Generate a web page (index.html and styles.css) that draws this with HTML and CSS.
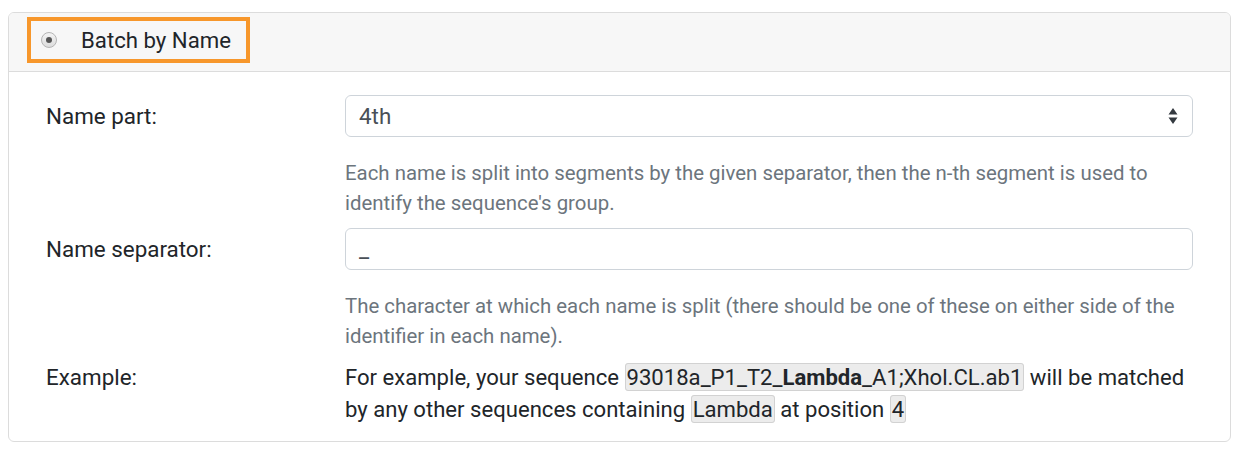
FILE: index.html
```html
<!DOCTYPE html>
<html>
<head>
<meta charset="utf-8">
<link rel="stylesheet" href="styles.css">
</head>
<body>
<div class="card">
  <div class="card-header">
    <label class="highlight">
      <span class="radio"><span class="dot"></span></span>
      <span class="title">Batch by Name</span>
    </label>
  </div>
  <div class="card-body">
    <div class="row">
      <div class="label">Name part:</div>
      <div class="field">
        <div class="control select">
          <span>4th</span>
          <svg class="arrows" width="10" height="18" viewBox="0 0 10 18"><path d="M5 1 L9.5 7.5 L0.5 7.5 Z M0.5 10.5 L9.5 10.5 L5 17 Z" fill="#343a40"/></svg>
        </div>
        <div class="help">Each name is split into segments by the given separator, then the n-th segment is used to identify the sequence's group.</div>
      </div>
    </div>
    <div class="row">
      <div class="label">Name separator:</div>
      <div class="field">
        <div class="control"><span>_</span></div>
        <div class="help">The character at which each name is split (there should be one of these on either side of the identifier in each name).</div>
      </div>
    </div>
    <div class="row example-row">
      <div class="label">Example:</div>
      <div class="field example">For example, your sequence <span class="code">93018a_P1_T2_<b>Lambda</b>_A1;Xhol.CL.ab1</span> will be matched by any other sequences containing <span class="code">Lambda</span> at position <span class="code">4</span></div>
    </div>
  </div>
</div>
</body>
</html>
```
FILE: styles.css
```css
body {
  margin: 8px;
  font-family: Roboto, "Liberation Sans", sans-serif;
  color: #212529;
  background: #fff;
}
.card {
  margin: 4px 5px 0 0;
  border: 1px solid #dcdcdc;
  border-radius: 6px;
  overflow: hidden;
}
.card-header {
  background: #f7f7f7;
  border-bottom: 1px solid #dcdcdc;
  padding: 4px 18px 8px;
}
.highlight {
  display: inline-flex;
  align-items: center;
  box-sizing: border-box;
  height: 46px;
  border: 4px solid #f7972b;
  padding: 0 15px 0 10px;
}
.radio {
  box-sizing: border-box;
  width: 16px;
  height: 16px;
  border-radius: 50%;
  border: 1px solid #b5b5b5;
  background: linear-gradient(#f4f4f4, #dcdcdc);
  display: flex;
  align-items: center;
  justify-content: center;
  margin-right: 24px;
}
.dot {
  width: 6px;
  height: 6px;
  border-radius: 50%;
  background: #555;
}
.title {
  font-size: 22.2px;
  line-height: 30px;
}
.card-body {
  padding: 23px 37px 16px 37px;
}
.row {
  display: grid;
  grid-template-columns: 299px 1fr;
  margin-bottom: 10px;
}
.label {
  font-size: 22.4px;
  line-height: 42px;
}
.control {
  box-sizing: border-box;
  height: 42px;
  border: 1px solid #ced4da;
  border-radius: 6px;
  padding: 0 14px 0 13px;
  display: flex;
  align-items: center;
  justify-content: space-between;
  font-size: 22.4px;
  color: #495057;
}
.help {
  margin-top: 21px;
  font-size: 20.4px;
  line-height: 30px;
  color: #6c757d;
}
.example-row {
  margin-top: 10px;
  margin-bottom: 0;
}
.example-row .label {
  line-height: 32px;
}
.example {
  font-size: 22.1px;
  line-height: 32px;
}
.code {
  background: #ececec;
  border: 1px solid #d2d2d2;
  border-radius: 3px;
  padding: 0 1px;
}
.code b {
  font-weight: 700;
}
```
